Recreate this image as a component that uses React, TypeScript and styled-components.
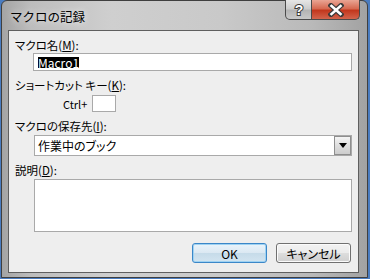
import React from "react";
import styled, { createGlobalStyle, css } from "styled-components";

const GlobalStyle = createGlobalStyle`
  html, body {
    margin: 0;
    padding: 0;
  }
  body {
    width: 370px;
    height: 279px;
    overflow: hidden;
    background: #4a7cc0;
    font-family: "Noto Sans CJK JP", "Noto Sans", sans-serif;
    font-feature-settings: "palt";
    color: #000;
  }
`;

const Window = styled.div`
  box-sizing: border-box;
  width: 367px;
  height: 278px;
  margin-left: 1px;
  border: 1px solid #3f3f3f;
  border-radius: 6px 6px 0 0;
  background: linear-gradient(
    to right,
    #a4a4a4 0,
    #bdbdbd 8%,
    #cfcfcf 30%,
    #c9c9c9 60%,
    #b9b9b9 85%,
    #a2a2a2 100%
  );
  display: flex;
  flex-direction: column;
  padding: 0 8px 4px 6px;
`;

const TitleBar = styled.div`
  height: 29px;
  display: flex;
  align-items: flex-start;
  padding-left: 2px;
`;

const Title = styled.div`
  font-size: 12.5px;
  line-height: 14px;
  margin-top: 9px;
  font-feature-settings: normal;
  color: #000;
  flex: 1;
  text-shadow: 0 0 6px rgba(255, 255, 255, 0.9);
`;

const CaptionButton = styled.div<{ variant: "help" | "close" }>`
  box-sizing: border-box;
  height: 20px;
  margin-top: -1px;
  display: flex;
  align-items: center;
  justify-content: center;
  border: 1px solid #4a4a4a;
  border-top: none;
  ${(p) =>
    p.variant === "help"
      ? css`
          width: 27px;
          border-radius: 0 0 0 5px;
          background: linear-gradient(#e6e6e6, #cdcdcd 45%, #b4b4b4 55%, #c8c8c8);
        `
      : css`
          width: 48px;
          margin-right: -1px;
          border-left: none;
          border-radius: 0 0 5px 0;
          background: linear-gradient(#e9a594, #d66a52 45%, #c2371d 55%, #d2644c);
        `}
`;

const Client = styled.div`
  flex: 1;
  box-sizing: border-box;
  border: 1px solid #5f5f5f;
  background: #eeeeee;
  padding: 7px 6px 0 6px;
  display: flex;
  flex-direction: column;
`;

const FieldLabel = styled.div<{ gap?: number }>`
  font-size: 11.5px;
  line-height: 14px;
  margin-top: ${(p) => p.gap ?? 0}px;
  u {
    text-decoration: underline;
    text-underline-offset: 1px;
  }
`;

const TextBox = styled.div`
  box-sizing: border-box;
  height: 18px;
  margin: 1px 0 0 18px;
  background: #fff;
  border: 1px solid #a9a9a9;
  display: flex;
  align-items: center;
  padding-left: 4px;
`;

const Selection = styled.span`
  background: #000;
  color: #fff;
  font-size: 12px;
  line-height: 11px;
`;

const ShortcutRow = styled.div`
  display: flex;
  align-items: center;
  margin-top: 3px;
  padding-left: 48px;
  gap: 5px;
  font-size: 11px;
`;

const KeyBox = styled.div`
  box-sizing: border-box;
  width: 24px;
  height: 17px;
  background: #fff;
  border: 1px solid #a9a9a9;
`;

const Combo = styled.div`
  box-sizing: border-box;
  height: 21px;
  margin: 2px 0 0 19px;
  background: #fff;
  border: 1px solid #a9a9a9;
  display: flex;
  align-items: center;
  padding: 0 0 0 3px;
  font-size: 12px;
`;

const ComboText = styled.div`
  flex: 1;
`;

const DropButton = styled.div`
  box-sizing: border-box;
  width: 17px;
  height: 19px;
  border: 1px solid #8e8e8e;
  background: linear-gradient(#f4f4f4, #dedede 50%, #cdcdcd);
  display: flex;
  align-items: center;
  justify-content: center;
`;

const MemoBox = styled.div`
  box-sizing: border-box;
  height: 53px;
  margin: 2px 0 0 19px;
  background: #fff;
  border: 1px solid #a9a9a9;
`;

const ButtonRow = styled.div`
  display: flex;
  justify-content: flex-end;
  gap: 9px;
  margin-top: 11px;
  padding-right: 1px;
`;

const PushButton = styled.div<{ primary?: boolean }>`
  box-sizing: border-box;
  width: 75px;
  height: 20px;
  border-radius: 3px;
  display: flex;
  align-items: center;
  justify-content: center;
  font-size: 12px;
  ${(p) =>
    p.primary
      ? css`
          border: 1px solid #3b87c8;
          background: linear-gradient(#eaf4fb, #dbe8f2 50%, #c6dbe9 51%, #d2e4f0);
          box-shadow: inset 0 0 0 1px #9fd2f2;
        `
      : css`
          border: 1px solid #707070;
          background: linear-gradient(#f2f2f2, #ebebeb 50%, #dddddd 51%, #cfcfcf);
          box-shadow: inset 0 0 0 1px #fbfbfb;
        `}
`;

export default function App() {
  return (
    <>
      <GlobalStyle />
      <Window>
        <TitleBar>
          <Title>マクロの記録</Title>
          <CaptionButton variant="help">
            <svg width="14" height="16" viewBox="0 0 14 16">
              <text
                x="7"
                y="13"
                textAnchor="middle"
                fontFamily="Liberation Sans, sans-serif"
                fontWeight="bold"
                fontSize="14"
                fill="#fff"
                stroke="#3c3c3c"
                strokeWidth="2"
                paintOrder="stroke"
              >
                ?
              </text>
            </svg>
          </CaptionButton>
          <CaptionButton variant="close">
            <svg width="16" height="14" viewBox="0 0 16 14">
              <path d="M3 2.5 L13 11.5 M13 2.5 L3 11.5" stroke="#3a3a3a" strokeWidth="5" strokeLinecap="square" />
              <path d="M3.5 3 L12.5 11 M12.5 3 L3.5 11" stroke="#fff" strokeWidth="2.6" strokeLinecap="square" />
            </svg>
          </CaptionButton>
        </TitleBar>
        <Client>
          <FieldLabel>
            マクロ名(<u>M</u>):
          </FieldLabel>
          <TextBox>
            <Selection>Macro1</Selection>
          </TextBox>
          <FieldLabel gap={7}>
            ショートカット キー(<u>K</u>):
          </FieldLabel>
          <ShortcutRow>
            <span>Ctrl+</span>
            <KeyBox />
          </ShortcutRow>
          <FieldLabel gap={7}>
            マクロの保存先(<u>I</u>):
          </FieldLabel>
          <Combo>
            <ComboText>作業中のブック</ComboText>
            <DropButton>
              <svg width="8" height="5" viewBox="0 0 8 5">
                <path d="M0 0 H8 L4 5 Z" fill="#000" />
              </svg>
            </DropButton>
          </Combo>
          <FieldLabel gap={7}>
            説明(<u>D</u>):
          </FieldLabel>
          <MemoBox />
          <ButtonRow>
            <PushButton primary>OK</PushButton>
            <PushButton>キャンセル</PushButton>
          </ButtonRow>
        </Client>
      </Window>
    </>
  );
}
